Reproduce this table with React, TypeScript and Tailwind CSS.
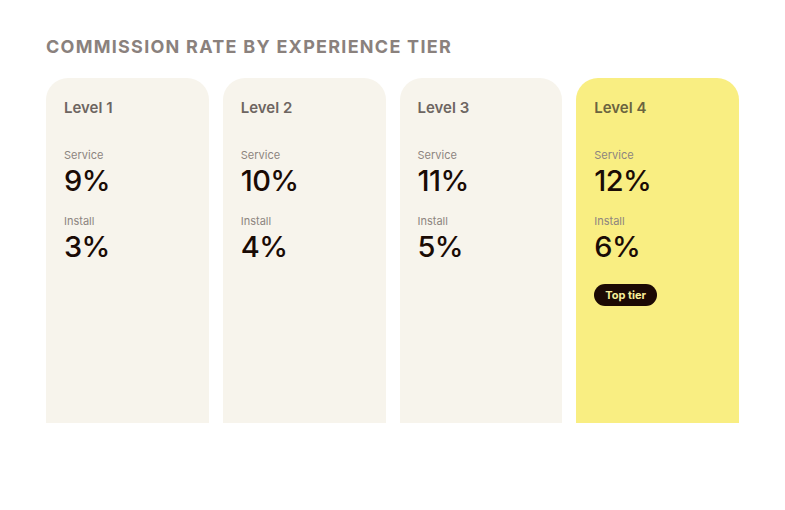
const tiers = [
  { name: "Level 1", service: "9%", install: "3%" },
  { name: "Level 2", service: "10%", install: "4%" },
  { name: "Level 3", service: "11%", install: "5%" },
  { name: "Level 4", service: "12%", install: "6%", top: true },
];

function TierCard({ tier }: { tier: (typeof tiers)[number] }) {
  return (
    <div
      className={
        tier.top
          ? "h-[345px] rounded-t-[22px] bg-[#f9ee82] px-[18px] pt-[21px]"
          : "h-[345px] rounded-t-[22px] bg-[#f7f4ec] px-[18px] pt-[21px]"
      }
    >
      <div
        className={
          tier.top
            ? "text-[15px] font-semibold leading-[18px] text-[#6b6440]"
            : "text-[15px] font-semibold leading-[18px] text-[#6d6561]"
        }
      >
        {tier.name}
      </div>
      <div className="mt-[32px] text-[11px] leading-[13px] text-[#8d8580]">Service</div>
      <div className="mt-[3px] text-[29px] font-medium leading-[32px] tracking-[-0.02em] text-[#1a0b05]">
        {tier.service}
      </div>
      <div className="mt-[18px] text-[11px] leading-[13px] text-[#8d8580]">Install</div>
      <div className="mt-[3px] text-[29px] font-medium leading-[32px] tracking-[-0.02em] text-[#1a0b05]">
        {tier.install}
      </div>
      {tier.top && (
        <div className="mt-[21px] inline-flex h-[22px] items-center rounded-full bg-[#1c0a04] px-[11px] text-[11px] font-bold text-[#f8ee9a]">
          Top tier
        </div>
      )}
    </div>
  );
}

export default function App() {
  return (
    <div className="h-[510px] w-[785px] bg-white pl-[46px] pt-[37px] font-['Inter',sans-serif]">
      <h2 className="text-[18px] font-bold leading-[20px] tracking-[0.07em] text-[#8a817d]">
        COMMISSION RATE BY EXPERIENCE TIER
      </h2>
      <div className="mt-[21px] grid w-[693px] grid-cols-4 gap-[14px]">
        {tiers.map((t) => (
          <TierCard key={t.name} tier={t} />
        ))}
      </div>
    </div>
  );
}
